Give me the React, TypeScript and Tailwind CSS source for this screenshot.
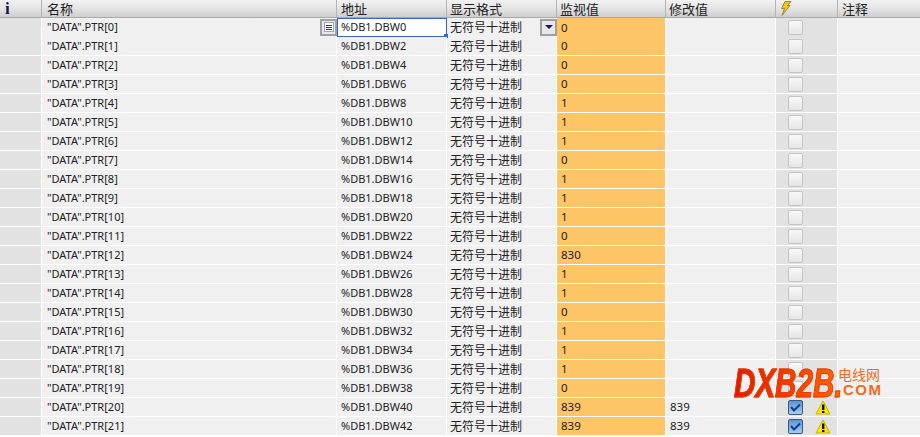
const VALUES = ["0","0","0","0","1","1","1","0","1","1","1","0","830","1","1","0","1","1","1","0","839","839"];

const CJK = { fontFamily: '"Noto Sans CJK SC", sans-serif' };
const COLS = "grid grid-cols-[42px_295px_110px_110px_109px_110px_62px_82px]";

function Checkbox({ checked }: { checked: boolean }) {
  if (checked) {
    return (
      <div className="w-[15px] h-[15px] rounded-[2px] border border-[#3d5a78] bg-gradient-to-b from-[#5c93d6] to-[#a9cdf0] flex items-center justify-center">
        <svg width="11" height="9" viewBox="0 0 11 9">
          <path d="M1 4 L4 7.5 L10 1.5" fill="none" stroke="#0b3f8a" strokeWidth="2" />
        </svg>
      </div>
    );
  }
  return <div className="w-[15px] h-[15px] rounded-[2px] border border-[#c4c4c4] bg-gradient-to-b from-[#f8f8f8] to-[#e6e6e6]" />;
}

function Warning() {
  return (
    <svg width="16" height="15" viewBox="0 0 16 15">
      <path d="M8 1 L15 14 L1 14 Z" fill="#ffe600" stroke="#c9b400" strokeWidth="1" />
      <rect x="7" y="4.5" width="2.4" height="5.5" fill="#111" />
      <rect x="7" y="11" width="2.4" height="2" fill="#111" />
    </svg>
  );
}

function HeaderCell({ label, className }: { label?: string; className?: string }) {
  return (
    <div
      className={`h-[17px] border-r border-[#b4b4b4] flex items-center text-[13px] leading-[17px] text-[#222] whitespace-nowrap ${className ?? "pl-[3px]"}`}
      style={CJK}
    >
      {label}
    </div>
  );
}

function Row({ index, value }: { index: number; value: string }) {
  const forced = index >= 20;
  const first = index === 0;
  return (
    <div className={`${COLS} h-[19px] border-b border-white text-[11px] text-[#222]`} style={{ fontFamily: '"Noto Sans", sans-serif' }}>
      <div className="bg-[#e2e2e2] border-r border-white" />
      <div className="bg-[#f0f0f0] border-r border-white pl-[5px] flex items-center justify-between">
        <span>"DATA".PTR[{index}]</span>
        {first && (
          <div className="w-[17px] h-[17px] mr-[-1px] border-2 border-[#a0a0a0] bg-[#e4e8f0] flex items-center justify-center">
            <div className="w-[10px] h-[10px] bg-white border border-[#9aa6c8] flex flex-col justify-center gap-[1px] px-[1px]">
              <div className="h-px bg-[#26339a]" />
              <div className="h-px bg-[#26339a]" />
              <div className="h-px bg-[#26339a]" />
            </div>
          </div>
        )}
      </div>
      <div className={`relative flex items-center ${first ? "bg-white border border-[#3566c8] pl-[3px]" : "bg-[#f0f0f0] border-r border-white pl-[4px]"}`}>
        <span>%DB1.DBW{index * 2}</span>
        {first && <div className="absolute right-[-2px] bottom-[-2px] w-[4px] h-[4px] bg-[#3566c8]" />}
      </div>
      <div className="bg-[#f0f0f0] border-r border-white pl-[3px] flex items-center justify-between text-[12px]" style={CJK}>
        <span>无符号十进制</span>
        {first && (
          <div className="w-[17px] h-[17px] mr-[-1px] border-2 border-[#a0a0a0] bg-[#e8e8e8] flex items-center justify-center">
            <div className="w-0 h-0 border-l-[4px] border-r-[4px] border-t-[4px] border-l-transparent border-r-transparent border-t-[#14147a]" />
          </div>
        )}
      </div>
      <div className="bg-[#fec566] border-r border-white pl-[4px] flex items-center text-[11.5px]">{value}</div>
      <div className="bg-[#f0f0f0] border-r border-white pl-[4px] flex items-center text-[11.5px]">{forced ? value : ""}</div>
      <div className="bg-[#e2e2e2] border-r border-white pl-[12px] flex items-center gap-[12px]">
        <Checkbox checked={forced} />
        {forced && <Warning />}
      </div>
      <div className="bg-[#f0f0f0]" />
    </div>
  );
}

export default function App() {
  return (
    <div className="relative w-[920px] h-[437px] overflow-hidden bg-white">
      <div className={`${COLS} h-[18px] border-b border-[#a8a8a8] bg-gradient-to-b from-[#f2f2f2] via-[#e4e4e4] to-[#cfcfcf]`}>
        <HeaderCell />
        <HeaderCell label="名称" className="pl-[5px]" />
        <HeaderCell label="地址" className="pl-[4px]" />
        <HeaderCell label="显示格式" />
        <HeaderCell label="监视值" />
        <HeaderCell label="修改值" />
        <div className="h-[17px] border-r border-[#b4b4b4] pl-[3px] flex items-center">
          <svg width="13" height="15" viewBox="0 0 13 15">
            <path d="M6 0.5 L12 0.5 L8.5 4.5 L11 4.5 L3 14.5 L5.5 7.5 L2.5 7.5 Z" fill="#f0c820" stroke="#8a7418" strokeWidth="0.8" />
          </svg>
        </div>
        <div className="h-[17px] pl-[4px] flex items-center text-[13px] leading-[17px] text-[#222]" style={CJK}>注释</div>
      </div>
      <div className="absolute left-[5px] top-0 h-[17px] flex items-center text-[17px] font-bold text-[#14145f]" style={{ fontFamily: '"Liberation Serif", serif' }}>i</div>
      {VALUES.map((v, i) => (
        <Row key={i} index={i} value={v} />
      ))}
      {/* watermark */}
      <div className="absolute left-[734px] top-[363px] h-[40px] origin-left scale-x-[0.74] pointer-events-none">
        <span
          className="block text-[40px] leading-[40px] font-bold italic bg-gradient-to-r from-[#e01800] via-[#f03c00] to-[#ff6a00] bg-clip-text text-transparent [-webkit-text-stroke:1px_#ea3a00]"
          style={{ fontFamily: '"Liberation Sans", sans-serif' }}
        >
          DXB2B.
        </span>
      </div>
      <div className="absolute left-[838px] top-[366px] text-[14px] leading-[16px] text-[#f26a1b]" style={CJK}>电线网</div>
      <div className="absolute left-[843px] top-[382px] text-[15px] leading-[16px] font-bold text-[#f26a1b] tracking-[1.5px]" style={{ fontFamily: '"Liberation Sans", sans-serif' }}>COM</div>
    </div>
  );
}
